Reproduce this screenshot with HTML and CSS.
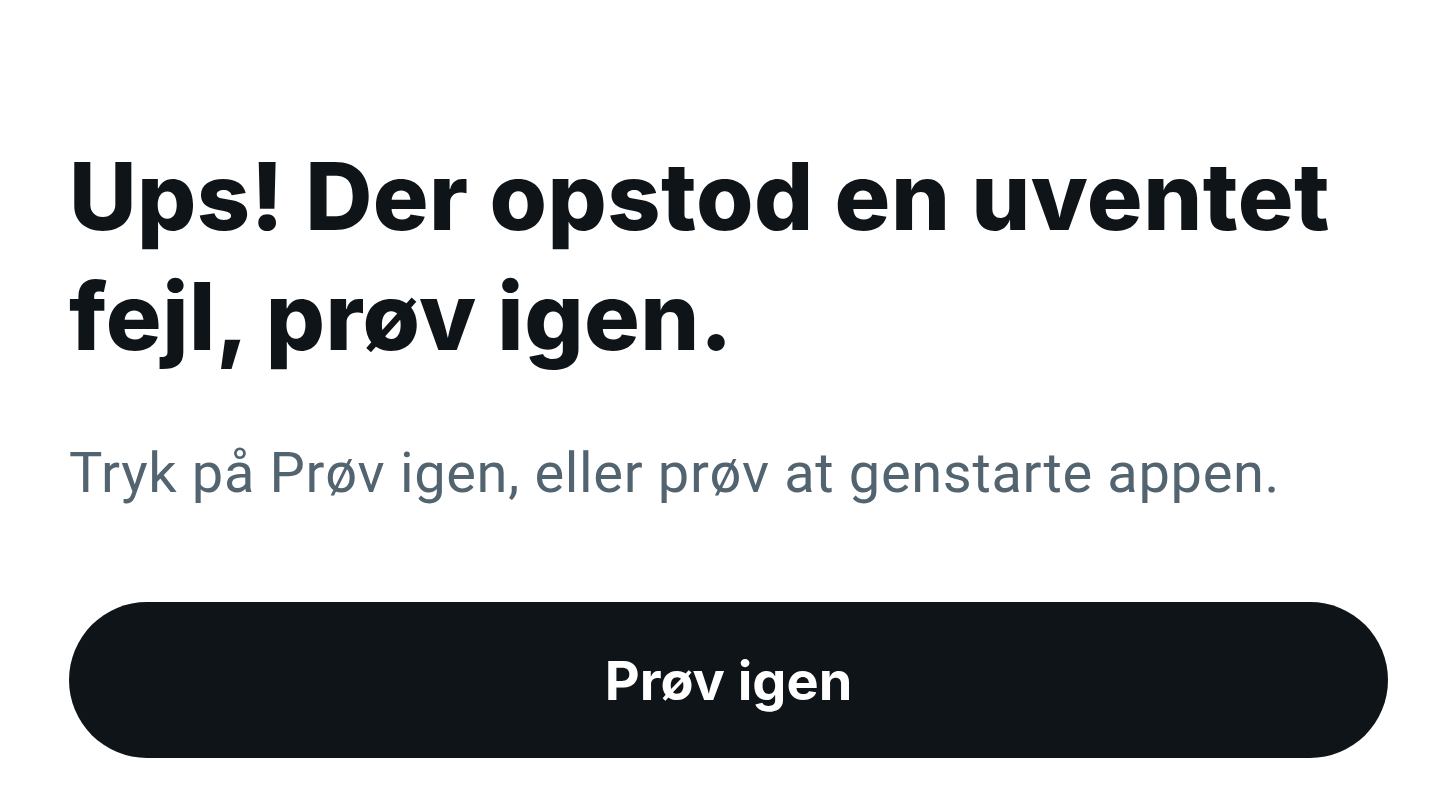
FILE: index.html
```html
<!DOCTYPE html>
<html lang="da">
<head>
<meta charset="utf-8">
<title>Fejl</title>
<link rel="stylesheet" href="styles.css">
</head>
<body>
<main class="page">
  <h1 class="title">Ups! Der opstod en uventet fejl, prøv igen.</h1>
  <p class="subtitle">Tryk på Prøv igen, eller prøv at genstarte appen.</p>
  <button class="retry" type="button">Prøv igen</button>
</main>
</body>
</html>
```
FILE: styles.css
```css
html, body {
  margin: 0;
  padding: 0;
  background: #ffffff;
}
.page {
  width: 1319px;
  padding: 136px 0 0 69px;
  display: flex;
  flex-direction: column;
  font-family: Inter, "Liberation Sans", sans-serif;
}
.title {
  margin: 0;
  font-size: 93px;
  font-weight: 800;
  line-height: 120px;
  letter-spacing: 0.45px;
  color: #0f1419;
  width: 1310px;
}
.subtitle {
  margin: 61px 0 0 0;
  font-family: Roboto, "Liberation Sans", sans-serif;
  font-size: 56px;
  line-height: 72px;
  letter-spacing: 0.65px;
  color: #536471;
}
.retry {
  margin-top: 93px;
  height: 156px;
  border: 0;
  border-radius: 78px;
  background: #0f1419;
  color: #ffffff;
  font-family: Inter, "Liberation Sans", sans-serif;
  font-weight: 700;
  font-size: 54px;
  cursor: pointer;
}
```
